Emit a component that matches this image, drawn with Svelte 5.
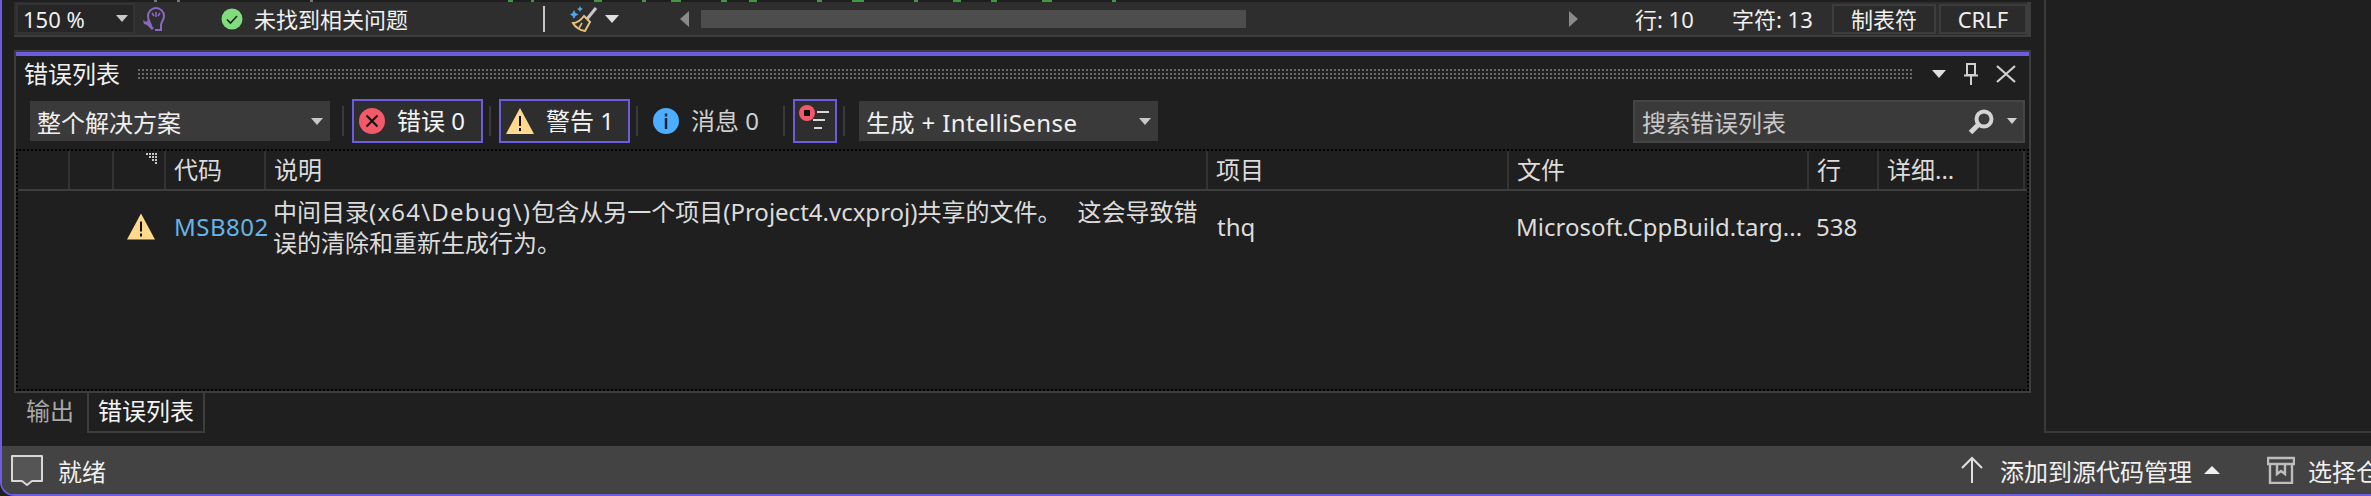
<script>
    const marks = [
        [140, 3, "#777"], [20, 3, "#777"], [130, 3, "#777"], [195, 5, "#3f9a3f"], [18, 3, "#3f9a3f"],
        [60, 8, "#3f9a3f"], [40, 4, "#3f9a3f"], [25, 10, "#3f9a3f"], [40, 6, "#3f9a3f"], [22, 8, "#3f9a3f"],
        [60, 5, "#3f9a3f"], [30, 12, "#3f9a3f"], [50, 4, "#3f9a3f"], [35, 8, "#3f9a3f"], [30, 6, "#3f9a3f"],
        [45, 10, "#3f9a3f"], [60, 4, "#3f9a3f"]
    ];
    const columns = [
        { label: "" },
        { label: "" },
        { label: "", sort: true },
        { label: "代码" },
        { label: "说明" },
        { label: "项目" },
        { label: "文件" },
        { label: "行" },
        { label: "详细..." },
        { label: "" }
    ];
</script>

<div class="window">
    <div class="work">
        <div class="main">
            <div class="code-strip">
                {#each marks as m}
                    <span style="margin-left: {m[0]}px; width: {m[1]}px; background: {m[2]}"></span>
                {/each}
            </div>
            <div class="editor-bar">
                <div class="zoom-box">
                    <span>150 %</span>
                    <i class="arrow"></i>
                </div>
                <svg class="bulb" width="24" height="26" viewBox="0 0 24 26" fill="none" stroke="#8a68c4" stroke-width="2">
                    <path d="M9 20c0-3-3-4-3-10a8 8 0 0 1 16 0c0 4-3 6-3 9v5h-6" />
                    <path d="M14 6v5M10 7l2 3M18 7l-2 3" stroke-width="1.6" />
                    <path d="M1 14l3 2 2-2 1 3 5 5-2 2-5-5-3-1z" fill="#8a68c4" stroke="none" />
                </svg>
                <svg class="check" width="22" height="22" viewBox="0 0 22 22">
                    <circle cx="11" cy="11" r="10.5" fill="#80dc7c" />
                    <path d="M6 11.500l3.500 3.500 6.500-7" fill="none" stroke="#16261a" stroke-width="1.600" />
                </svg>
                <span class="issues">未找到相关问题</span>
                <i class="bar-sep"></i>
                <svg class="brush" width="28" height="26" viewBox="0 0 28 26" fill="none">
                    <path d="M4 4l1.500 3 3 1.500-3 1.500L4 13l-1.500-3L0 8.500 2.500 7zM10 0l1 2 2 1-2 1-1 2-1-2-2-1 2-1z" fill="#4ea8e8" />
                    <path d="M17 13L26 2" stroke="#c8c8c8" stroke-width="3" />
                    <path d="M14 10l6 6-5 9c-4 0-10-4-12-8 4 0 8-3 11-7z" stroke="#e8c37a" stroke-width="2" />
                    <path d="M9 22l3-5" stroke="#e8c37a" stroke-width="1.500" />
                </svg>
                <i class="arrow big"></i>
                <div class="hscroll">
                    <i class="tri left"></i>
                    <div class="track"><div class="thumb"></div></div>
                    <i class="tri right"></i>
                </div>
                <span class="pos line">行: 10</span>
                <span class="pos col">字符: 13</span>
                <span class="cell tabs-cell">制表符</span>
                <span class="cell crlf-cell">CRLF</span>
            </div>

            <section class="panel">
                <header class="title-row">
                    <span class="title">错误列表</span>
                    <div class="grip"></div>
                    <i class="arrow big"></i>
                    <svg width="16" height="22" viewBox="0 0 16 22" fill="none" stroke="#d0d0d0" stroke-width="2">
                        <path d="M4 1h8v11H4zM1 12.500h14M8 13v9" />
                    </svg>
                    <svg width="20" height="18" viewBox="0 0 20 18" fill="none" stroke="#d0d0d0" stroke-width="2.200">
                        <path d="M1 1l18 16M19 1L1 17" />
                    </svg>
                </header>

                <div class="toolbar">
                    <div class="combo scope">
                        <span>整个解决方案</span>
                        <i class="arrow"></i>
                    </div>
                    <i class="sep"></i>
                    <button class="toggle on">
                        <svg width="26" height="26" viewBox="0 0 26 26">
                            <circle cx="13" cy="13" r="13" fill="#f25a6a" />
                            <path d="M7.500 7.500l11 11M18.500 7.500l-11 11" stroke="#111" stroke-width="2" />
                        </svg>
                        <span>错误 0</span>
                    </button>
                    <i class="sep"></i>
                    <button class="toggle on">
                        <svg width="28" height="26" viewBox="0 0 28 26">
                            <path d="M14 0l14 26H0z" fill="#ffd98e" />
                            <path d="M14 8v10M14 20v3" stroke="#111" stroke-width="2" />
                        </svg>
                        <span>警告 1</span>
                    </button>
                    <i class="sep"></i>
                    <button class="toggle">
                        <svg width="26" height="26" viewBox="0 0 26 26">
                            <circle cx="13" cy="13" r="13" fill="#4dadff" />
                            <path d="M13 10v11M13 5.500v3" stroke="#10202e" stroke-width="2.400" />
                        </svg>
                        <span class="dim">消息 0</span>
                    </button>
                    <i class="sep"></i>
                    <button class="toggle on filter">
                        <svg width="32" height="32" viewBox="0 0 32 32">
                            <circle cx="8" cy="8" r="8" fill="#f25a6a" />
                            <rect x="5" y="5" width="6" height="6" fill="#111" />
                            <path d="M18 7h12M14 15h12M15 23h8" stroke="#d8d8d8" stroke-width="2" />
                        </svg>
                    </button>
                    <i class="sep"></i>
                    <div class="combo build">
                        <span>生成 + IntelliSense</span>
                        <i class="arrow"></i>
                    </div>
                    <div class="search">
                        <span>搜索错误列表</span>
                        <svg width="27" height="27" viewBox="0 0 27 27" fill="none">
                            <circle cx="16" cy="11" r="7.500" stroke="#d4d4d4" stroke-width="4" />
                            <path d="M10 17L2.500 24.500" stroke="#d4d4d4" stroke-width="5" />
                        </svg>
                        <i class="arrow small"></i>
                    </div>
                </div>

                <div class="list">
                    <div class="grid head">
                        {#each columns as c}
                            <div class="th">
                                {c.label}
                                {#if c.sort}
                                    <svg class="sort" width="12" height="11" viewBox="0 0 12 11" fill="#c8c8c8">
                                        <path d="M0 0h2v2H0zM3 0h2v2H3zM6 0h2v2H6zM9 0h2v2H9zM3 3h2v2H3zM6 3h2v2H6zM9 3h2v2H9zM6 6h2v2H6zM9 6h2v2H9zM9 9h2v2H9z" />
                                    </svg>
                                {/if}
                            </div>
                        {/each}
                    </div>
                    <div class="grid row">
                        <div></div>
                        <div></div>
                        <div class="td warn">
                            <svg width="28" height="27" viewBox="0 0 28 26">
                                <path d="M14 0l14 26H0z" fill="#ffd98e" />
                                <path d="M14 8v10M14 20v3" stroke="#111" stroke-width="2" />
                            </svg>
                        </div>
                        <div class="td code">MSB8028</div>
                        <div class="td desc">中间目录<span class="path">(x64\Debug\)</span>包含从另一个项目(Project4.vcxproj)共享的文件。<span class="gap"></span>这会导致错<br />误的清除和重新生成行为。</div>
                        <div class="td project">thq</div>
                        <div class="td">Microsoft.CppBuild.targ...</div>
                        <div class="td">538</div>
                        <div></div>
                        <div></div>
                    </div>
                </div>
            </section>

            <nav class="tabs">
                <span class="tab">输出</span>
                <span class="tab active">错误列表</span>
            </nav>
        </div>
        <aside class="side"></aside>
    </div>

    <footer class="status">
        <svg class="ready" width="34" height="33" viewBox="0 0 34 33">
            <path d="M2 2h30v25H22l-5 4-5-4H2z" fill="#555" stroke="#d8d8d8" stroke-width="2" stroke-linejoin="round" />
        </svg>
        <span class="ready-text">就绪</span>
        <svg class="up" width="22" height="28" viewBox="0 0 22 28" fill="none" stroke="#e0e0e0" stroke-width="2">
            <path d="M11 27V2M1 12L11 2l10 10" />
        </svg>
        <span class="src">添加到源代码管理</span>
        <i class="up-tri"></i>
        <svg class="repo" width="28" height="28" viewBox="0 0 28 28" fill="none" stroke="#bdbdbd" stroke-width="2.400">
            <path d="M1 2h26v6H1zM3 8v19h22V8M10 8v10l4-3 4 3V8" />
        </svg>
        <span class="repo-text">选择仓库</span>
    </footer>
</div>

<style>
    :global(body) {
        margin: 0;
        background: #1f1f1f;
    }

    .window {
        width: 2371px;
        height: 496px;
        box-sizing: border-box;
        display: flex;
        flex-direction: column;
        overflow: hidden;
        background: #1f1f1f;
        border-left: 2px solid #6b5ce0;
        border-bottom: 2px solid #6b5ce0;
        border-bottom-left-radius: 14px;
        color: #f0f0f0;
        font-family: "Noto Sans", "Noto Sans CJK SC", sans-serif;
        font-size: 24px;
    }

    .work {
        height: 446px;
        display: flex;
        flex-shrink: 0;
    }

    .main {
        width: 2017px;
        flex-shrink: 0;
        margin-left: 12px;
        display: flex;
        flex-direction: column;
    }

    .side {
        flex: 1;
        height: 433px;
        margin-left: 13px;
        box-sizing: border-box;
        border-left: 2px solid #3a3a3a;
        border-bottom: 2px solid #3a3a3a;
    }

    .code-strip {
        height: 2px;
        display: flex;
        background: #1e1e1e;
    }

    .code-strip span {
        height: 2px;
        flex-shrink: 0;
    }

    .editor-bar {
        height: 35px;
        box-sizing: border-box;
        display: flex;
        align-items: center;
        background: #2e2e2e;
        border-bottom: 2px solid #3d3d3d;
        border-right: 4px solid #3d3d3d;
        font-size: 22px;
        line-height: 30px;
    }

    .editor-bar > * {
        flex-shrink: 0;
    }

    .zoom-box {
        width: 119px;
        height: 31px;
        margin-left: 2px;
        padding: 0 5px;
        box-sizing: border-box;
        display: flex;
        align-items: center;
        justify-content: space-between;
        background: #262626;
        border: 2px solid #333;
    }

    .arrow {
        width: 0;
        height: 0;
        flex-shrink: 0;
        border-left: 6px solid transparent;
        border-right: 6px solid transparent;
        border-top: 7px solid #c8c8c8;
    }

    .arrow.big {
        border-left-width: 7px;
        border-right-width: 7px;
        border-top: 8px solid #e0e0e0;
    }

    .arrow.small {
        border-left-width: 5px;
        border-right-width: 5px;
        border-top: 6px solid #d0d0d0;
    }

    .bulb {
        margin-left: 7px;
    }

    .check {
        margin-left: 55px;
    }

    .issues {
        margin-left: 11px;
        width: 289px;
        white-space: nowrap;
    }

    .bar-sep {
        width: 2px;
        height: 26px;
        background: #c8c8c8;
    }

    .brush {
        margin-left: 25px;
    }

    .editor-bar .arrow.big {
        margin-left: 7px;
    }

    .hscroll {
        width: 898px;
        margin-left: 61px;
        display: flex;
        align-items: center;
    }

    .tri {
        width: 0;
        height: 0;
        flex-shrink: 0;
        border-top: 8px solid transparent;
        border-bottom: 8px solid transparent;
    }

    .tri.left {
        border-right: 9px solid #8a8a8a;
    }

    .tri.right {
        border-left: 9px solid #8a8a8a;
    }

    .track {
        flex: 1;
        margin-left: 12px;
    }

    .thumb {
        width: 545px;
        height: 18px;
        background: #4d4d4d;
    }

    .pos {
        white-space: nowrap;
    }

    .pos.line {
        width: 97px;
        margin-left: 57px;
    }

    .pos.col {
        width: 100px;
    }

    .cell {
        height: 30px;
        box-sizing: border-box;
        display: flex;
        align-items: center;
        justify-content: center;
        background: #2b2b2b;
        border: 2px solid #3d3d3d;
    }

    .tabs-cell {
        width: 104px;
    }

    .crlf-cell {
        width: 88px;
        margin-left: 3px;
    }

    .panel {
        height: 343px;
        margin-top: 13px;
        box-sizing: border-box;
        display: flex;
        flex-direction: column;
        border: 2px solid #3d3d3d;
    }

    .panel::before {
        content: "";
        height: 4px;
        flex-shrink: 0;
        background: #6b5ce0;
    }

    .title-row {
        height: 43px;
        flex-shrink: 0;
        display: flex;
        align-items: center;
        gap: 17px;
        padding: 0 13px 7px 8px;
        box-sizing: border-box;
    }

    .title {
        white-space: nowrap;
        line-height: 30px;
    }

    .grip {
        flex: 1;
        height: 12px;
        margin-right: 2px;
        background-image: radial-gradient(#6a6a6a 1px, transparent 1.200px);
        background-size: 4px 4px;
    }

    .toolbar {
        height: 44px;
        flex-shrink: 0;
        display: flex;
        align-items: center;
        padding-left: 14px;
    }

    .toolbar > * {
        flex-shrink: 0;
    }

    .combo {
        height: 40px;
        padding: 0 7px;
        box-sizing: border-box;
        display: flex;
        align-items: center;
        justify-content: space-between;
        background: #3a3a3a;
        white-space: nowrap;
    }

    .scope {
        width: 300px;
        margin-right: 6px;
    }

    .build {
        width: 299px;
        margin-left: 6px;
        letter-spacing: 0.4px;
    }

    .sep {
        width: 2px;
        height: 30px;
        margin: 0 8px 0 6px;
        background: #3a3a3a;
    }

    .toggle {
        width: 131px;
        height: 44px;
        padding: 0 0 0 5px;
        box-sizing: border-box;
        display: flex;
        align-items: center;
        gap: 12px;
        border: 2px solid transparent;
        background: transparent;
        color: #f4f4f4;
        font: inherit;
        line-height: 30px;
        white-space: nowrap;
    }

    .toggle.on {
        background: #2e2e2e;
        border-color: #6b5ce0;
    }

    .toggle svg {
        flex-shrink: 0;
    }

    .toggle.filter {
        width: 44px;
        padding: 0 0 0 4px;
    }

    .dim {
        color: #cfcfcf;
    }

    .search {
        width: 392px;
        height: 43px;
        margin-left: 475px;
        padding: 0 6px 0 7px;
        box-sizing: border-box;
        display: flex;
        align-items: center;
        gap: 12px;
        background: #3a3a3a;
        border: 2px solid #454545;
        color: #c8c8c8;
    }

    .search span {
        flex: 1;
    }

    .list {
        margin-top: 6px;
        flex: 1;
        min-height: 0;
        box-sizing: border-box;
        border: 2px dotted #000;
    }

    .grid {
        display: grid;
        grid-template-columns: 52px 44px 52px 100px 942px 301px 300px 70px 100px 46px;
    }

    .head {
        height: 38px;
        border-bottom: 2px solid #3d3d3d;
    }

    .th {
        position: relative;
        box-sizing: border-box;
        padding-left: 8px;
        border-right: 2px solid #333;
        line-height: 38px;
        color: #dcdcdc;
        white-space: nowrap;
    }

    .sort {
        position: absolute;
        right: 6px;
        top: 2px;
    }

    .row {
        height: 70px;
    }

    .td {
        padding-left: 7px;
        overflow: hidden;
        white-space: nowrap;
        display: flex;
        align-items: center;
        color: #dcdcdc;
    }

    .warn {
        padding-left: 13px;
    }

    .code {
        color: #66b3e8;
        width: 103px;
        padding-left: 8px;
        box-sizing: border-box;
        letter-spacing: 0.5px;
    }

    .project {
        padding-left: 9px;
    }

    .desc {
        display: block;
        padding-top: 5px;
        line-height: 31px;
    }

    .path {
        letter-spacing: 1.2px;
    }

    .gap {
        display: inline-block;
        width: 16px;
    }

    .tabs {
        height: 40px;
        display: flex;
        align-items: stretch;
    }

    .tab {
        padding: 0 13px 0 12px;
        line-height: 36px;
        color: #a8a8a8;
        white-space: nowrap;
    }

    .tab.active {
        width: 118px;
        padding: 0 0 0 9px;
        box-sizing: border-box;
        color: #f4f4f4;
        border: 2px solid #3d3d3d;
        border-top: none;
    }

    .status {
        height: 48px;
        display: flex;
        align-items: center;
        background: #434343;
        flex-shrink: 0;
    }

    .status > * {
        flex-shrink: 0;
    }

    .ready {
        margin-left: 8px;
    }

    .ready-text {
        margin-left: 14px;
        white-space: nowrap;
    }

    .up {
        margin-left: 1855px;
    }

    .src {
        margin-left: 17px;
        white-space: nowrap;
    }

    .up-tri {
        width: 0;
        height: 0;
        margin-left: 12px;
        border-left: 8px solid transparent;
        border-right: 8px solid transparent;
        border-bottom: 8px solid #f0f0f0;
    }

    .repo {
        margin-left: 47px;
    }

    .repo-text {
        margin-left: 13px;
        white-space: nowrap;
    }
</style>
